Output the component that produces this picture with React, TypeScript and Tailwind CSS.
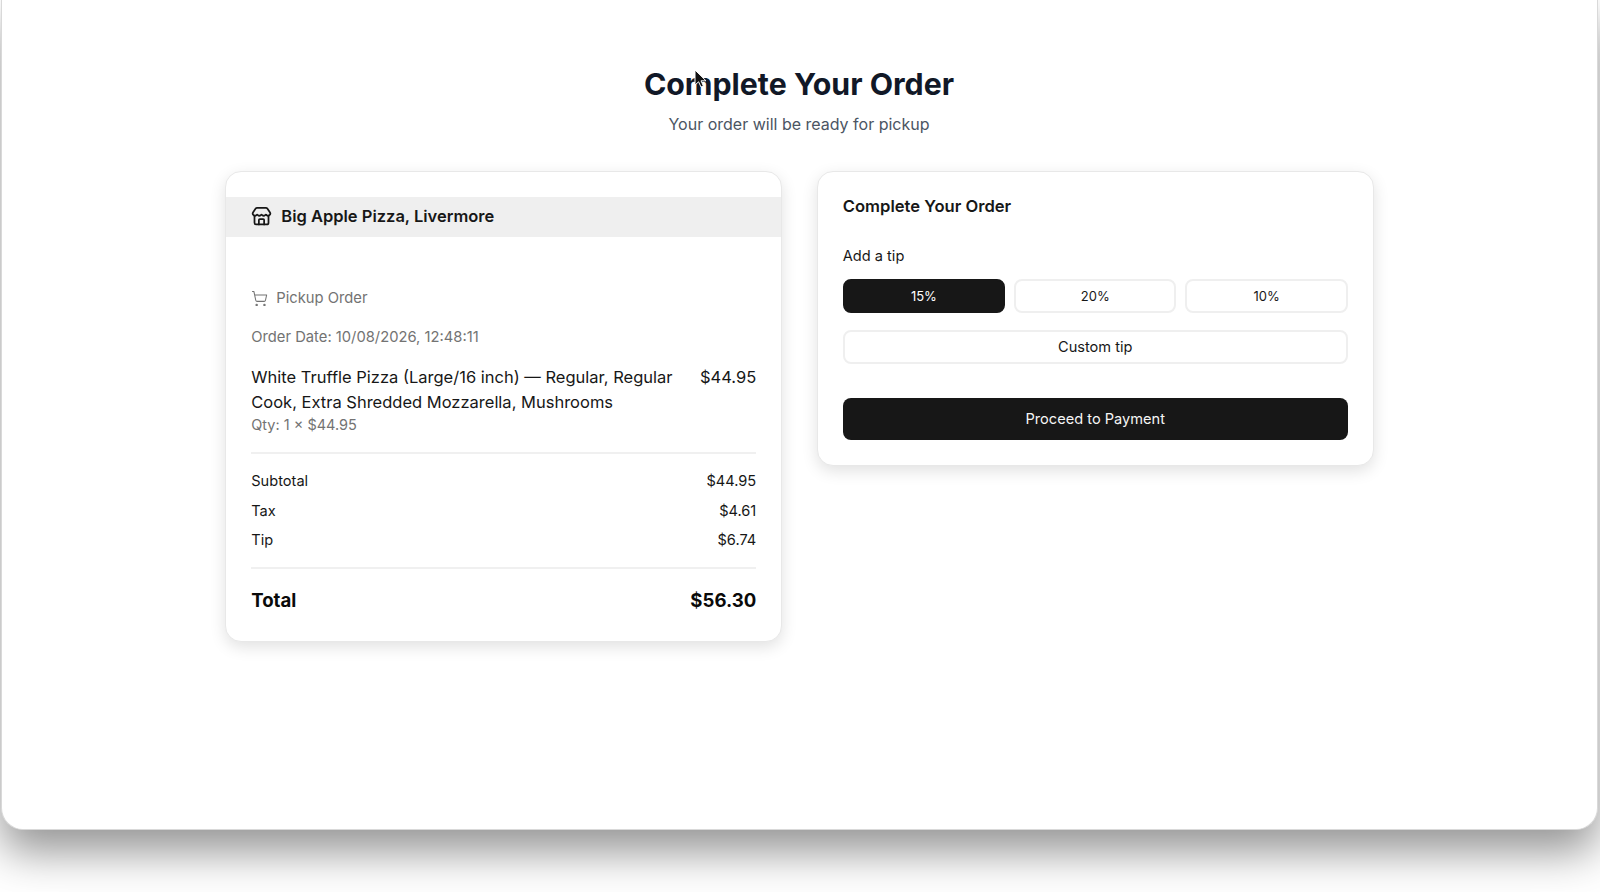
import { ShoppingCart, Store } from "lucide-react"

function Row({ label, value }: { label: string; value: string }) {
  return (
    <div className="flex h-[29.7px] items-center justify-between text-[14.6px] text-[#171717]">
      <span>{label}</span>
      <span>{value}</span>
    </div>
  )
}

function TipButton({ label, active }: { label: string; active?: boolean }) {
  return (
    <button
      className={
        active
          ? "h-[34px] flex-1 rounded-[8px] border-2 border-[#171717] bg-[#171717] pt-[2px] text-[13px] text-white"
          : "h-[34px] flex-1 rounded-[8px] border-2 border-[#efefef] bg-white pt-[2px] text-[13px] text-[#171717]"
      }
    >
      {label}
    </button>
  )
}

export default function App() {
  return (
    <div className="relative h-[892px] w-[1600px] overflow-hidden bg-white font-['Inter',sans-serif]">
      <div className="ml-[1px] h-[830px] w-[1597px] rounded-b-[22px] border-x border-b border-[#d9d9d9] bg-white pt-[64px] shadow-[0_22px_44px_rgba(0,0,0,0.42)]">
        <div className="flex flex-col items-center pr-[1px]">
          <h1 className="text-[30.3px] leading-[40px] font-bold text-[#111827]">Complete Your Order</h1>
          <p className="mt-[9px] text-[16px] leading-[22px] text-[#4b5563]">Your order will be ready for pickup</p>
        </div>

        <div className="mx-auto mt-[36px] flex w-[1148.5px] items-start gap-[34.5px]">
          <section className="w-[557px] rounded-[16px] border border-[#e8e8e8] bg-white pt-[25px] pb-[28px] shadow-[0_5px_16px_rgba(0,0,0,0.12)]">
            <div className="flex h-[40px] items-center gap-[9px] bg-[#efefef] px-[25px] pb-[2px] text-[16.5px] font-semibold text-[#171717]">
              <Store size={21} strokeWidth={2} />
              <span>Big Apple Pizza, Livermore</span>
            </div>

            <div className="px-[25px] pt-[50.5px]">
              <div className="flex h-[22px] items-center gap-[8px] text-[14.75px] text-[#737373]">
                <ShoppingCart size={17} strokeWidth={1.5} />
                <span>Pickup Order</span>
              </div>
              <p className="mt-[17px] text-[14.75px] leading-[20px] text-[#737373]">Order Date: 10/08/2026, 12:48:11</p>

              <div className="mt-[18px] flex items-start justify-between gap-[24px]">
                <div>
                  <p className="text-[16.5px] leading-[25.5px] text-[#171717]">
                    White Truffle Pizza (Large/16 inch) — Regular, Regular Cook, Extra Shredded Mozzarella, Mushrooms
                  </p>
                  <p className="-mt-[0.5px] text-[14.5px] leading-[20px] text-[#737373]">Qty: 1 × $44.95</p>
                </div>
                <span className="text-[16.5px] leading-[25.5px] text-[#171717]">$44.95</span>
              </div>

              <div className="mt-[17px] border-t-2 border-[#f0f0f0] pt-[13px] pb-[10.9px]">
                <Row label="Subtotal" value="$44.95" />
                <Row label="Tax" value="$4.61" />
                <Row label="Tip" value="$6.74" />
              </div>

              <div className="flex items-center justify-between border-t-2 border-[#f0f0f0] pt-[18.2px] pb-[0px] text-[18.6px] leading-[26px] font-bold text-[#0a0a0a]">
                <span>Total</span>
                <span>$56.30</span>
              </div>
            </div>
          </section>

          <section className="w-[557px] rounded-[16px] border border-[#e8e8e8] bg-white px-[25px] pt-[24px] pb-[25.5px] shadow-[0_5px_16px_rgba(0,0,0,0.12)]">
            <h2 className="text-[16.6px] leading-[20px] font-semibold text-[#171717]">Complete Your Order</h2>
            <p className="mt-[30px] text-[14.6px] leading-[20px] text-[#171717]">Add a tip</p>
            <div className="mt-[13px] flex gap-[9px]">
              <TipButton label="15%" active />
              <TipButton label="20%" />
              <TipButton label="10%" />
            </div>
            <button className="mt-[17px] h-[34px] w-full rounded-[8px] border-2 border-[#efefef] bg-white pt-[2px] text-[14.6px] text-[#171717]">
              Custom tip
            </button>
            <button className="mt-[33.5px] h-[42px] w-full rounded-[8px] bg-[#171717] pt-[2px] text-[14.6px] text-[#f5f5f5]">
              Proceed to Payment
            </button>
          </section>
        </div>
      </div>

      <svg className="absolute top-[69px] left-[694px]" width="14" height="20" viewBox="0 0 14 20">
        <path d="M1 1 L1 16 L4.6 12.8 L7 18 L9.4 17 L7 11.8 L12 11.8 Z" fill="#111" stroke="#fff" strokeWidth="1" />
      </svg>
    </div>
  )
}
